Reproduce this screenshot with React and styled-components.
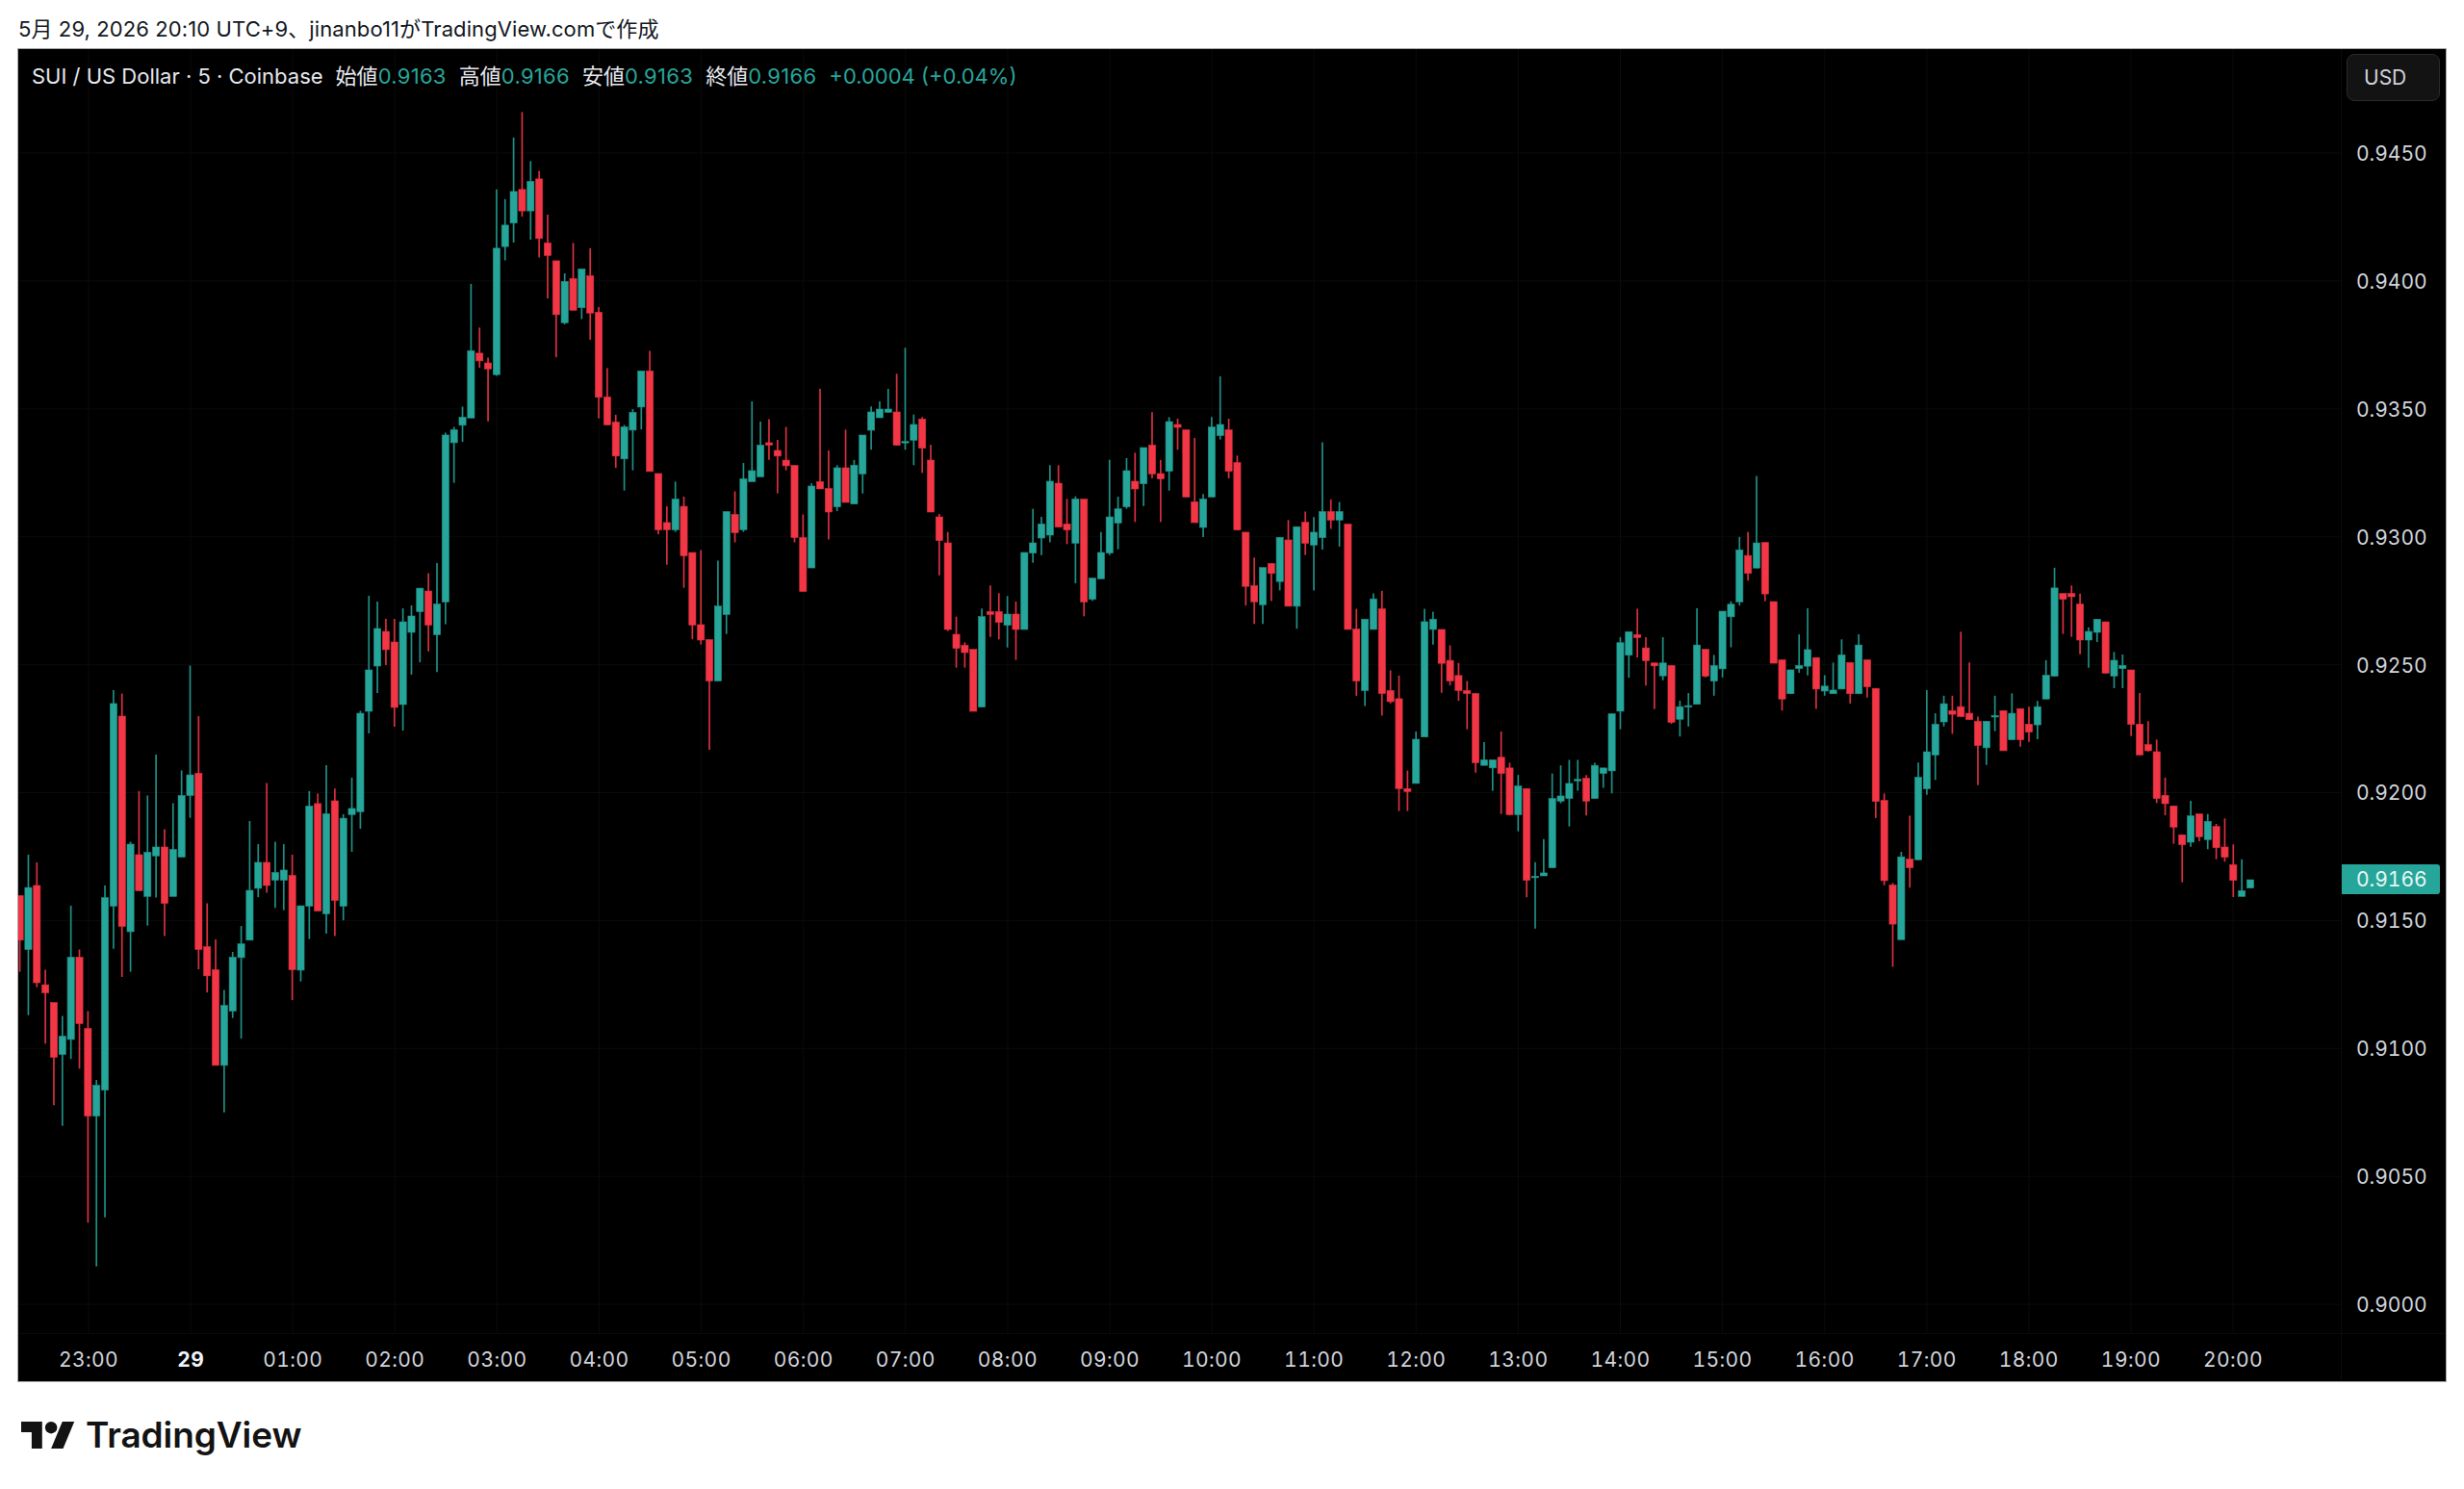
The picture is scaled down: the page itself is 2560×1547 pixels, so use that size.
import React from "react";
import styled, { createGlobalStyle } from "styled-components";

const GlobalStyle = createGlobalStyle`
    html, body {
        margin: 0;
        background: #fff;
    }
    body {
        font-family: Inter, "Noto Sans CJK JP", sans-serif;
    }
`;

const GREEN = "#26a69a";
const RED = "#f23645";

// candles read off the chart: up, wick top, body top, body bottom, wick bottom.
// each block was measured in its own crop, so y0 and k bring it back to page pixels
const blocks = [
    { y0: 680, k: 0.421, rows: [
        [0,595,595,705,783],[1,494,575,728,890],[0,513,570,810,821],[0,778,815,835,960],[0,859,859,994,1112],
        [1,892,942,987,1163],[1,620,747,950,998],[0,728,747,911,1022],[0,880,923,1139,1402],[1,1050,1063,1139,1510],
        [1,570,600,1075,1389],[1,88,121,621,726],[0,96,152,671,796],[1,462,468,684,783],[0,337,494,583,583],
        [1,348,488,597,669],[1,247,475,497,600],[0,431,475,614,695],[1,367,481,597,597],[1,286,348,500,500],
        [1,27,297,348,403],[0,152,293,728,777],[0,614,721,793,834],[0,703,778,1014,1014],[1,828,866,1014,1130],
        [1,734,747,880,897],[1,670,714,748,948],[1,411,582,705,705],[1,468,513,577,599],[0,317,513,570,588],
        [1,462,538,557,625],[1,468,532,557,631],[0,494,545,778,853],[1,620,620,779,807],[1,337,374,621,702],
        [0,343,368,633,633],[1,273,393,640,689],[0,331,361,607,695],[1,394,404,621,656],[1,304,380,395,487],
        [1,139,145,388,430],
    ]},
    { y0: 0, k: 1, rows: [
        [1,619,696,739,762],[1,625,653,692,720],[0,643,656,675,691],[0,643,667,735,755],[1,632,646,732,759],[1,629,640,657,701],
    ]},
    { y0: 100, k: 0.421, rows: [
        [1,1214,1214,1272,1397],[0,1177,1221,1305,1370],[1,1152,1253,1329,1421],[1,830,836,1248,1303],[1,816,823,855,954],
        [1,766,792,812,853],[1,463,628,794,794],[0,571,634,653,670],[0,645,658,673,802],[1,230,375,687,690],
        [1,254,318,371,405],[1,102,235,313,361],[0,39,230,283,297],[1,160,210,283,354],[0,184,204,351,398],
        [0,292,362,393,499],[0,406,406,539,644],[1,437,457,559,563],[0,362,450,528,528],[1,426,426,522,550],
        [0,375,443,535,601],[0,520,533,743,795],[0,671,742,811,811],[0,786,804,888,917],[1,811,816,895,973],
        [1,772,780,824,923],[1,678,678,767,822],[0,628,678,926,926],[0,931,931,1070,1081],[0,1012,1052,1070,1156],
        [1,951,994,1070,1075],[0,988,1012,1134,1213],[0,1126,1126,1305,1340],[0,1120,1304,1342,1353],[0,1341,1341,1443,1613],
        [1,1146,1258,1443,1443],[1,1025,1025,1279,1327],[0,975,1032,1077,1101],[1,905,944,1070,1075],[1,753,924,951,951],
        [1,803,861,939,939],[0,797,855,861,897],[0,848,874,888,980],[0,816,898,912,923],[0,911,911,1089,1101],
        [0,1032,1089,1222,1222],[1,955,962,1164,1164],[0,722,951,969,969],[0,874,968,1026,1094],
    ]},
    { y0: 360, k: 1 / 3, rows: [
        [1,370,378,500,513],[0,259,378,486,486],[1,354,370,491,491],[1,276,276,397,458],[1,187,204,261,322],
        [1,171,195,222,222],[1,132,195,205,205],[0,85,204,308,308],[1,4,296,299,322],[1,212,243,292,370],
        [0,220,226,317,394],[0,307,354,516,516],[0,522,531,605,713],[0,578,612,882,887],[0,842,897,941,1001],
        [0,922,931,954,1001],[0,944,944,1137,1137],[1,817,842,1124,1124],[0,745,826,835,905],[0,769,826,860,913],
        [1,778,834,869,938],[0,795,834,882,977],[1,642,642,882,882],[1,506,612,644,674],[1,531,553,597,650],
        [1,370,420,588,610],[0,370,426,563,563],[0,475,553,572,616],[1,467,475,613,738],[0,476,476,796,841],
        [1,722,722,788,793],[1,578,642,724,724],[1,353,531,644,650],[1,468,506,550,632],[1,348,387,500,506],
        [0,331,420,444,547],[1,315,315,428,497],[0,205,307,397,411],[0,354,396,413,547],[1,220,234,389,449],
        [0,225,243,252,322],[0,260,260,469,469],[0,285,484,549,549],[1,460,475,564,594],[1,220,251,469,469],
        [1,93,243,278,290],[0,225,260,389,411],[0,340,362,572,572],
    ]},
    { y0: 370, k: 0.3827, rows: [
        [0,478,478,625,677],[0,547,623,667,727],[1,574,574,675,727],[0,563,563,590,665],[1,492,492,612,636],
        [0,445,499,679,679],[1,463,463,679,740],[0,422,451,508,540],[1,437,478,513,636],[1,234,422,493,525],
        [0,389,422,445,469],[1,396,422,445,517],[0,456,456,742,742],[0,686,741,882,922],[1,714,714,908,950],
        [1,644,659,742,742],[0,637,686,916,976],[0,853,908,938,943],[0,867,930,1174,1235],[0,1125,1174,1182,1235],
        [1,1019,1040,1160,1160],[1,686,721,1034,1034],[1,694,714,742,783],[0,742,742,834,914],[0,785,826,882,894],
        [0,833,867,908,936],[0,882,908,916,1013],[0,916,916,1104,1131],[1,1048,1096,1111,1111],[1,1096,1096,1118,1180],
        [0,1019,1089,1133,1243],[0,1104,1118,1245,1247],[1,1137,1167,1245,1290],[0,1174,1174,1423,1469],[1,1374,1412,1415,1554],
        [1,1311,1403,1411,1411],[1,1133,1201,1389,1389],[1,1111,1194,1208,1214],[1,1096,1160,1201,1277],[1,1096,1149,1153,1180],
        [0,1137,1146,1208,1247],[1,1104,1111,1201,1201],[1,1118,1118,1133,1172],[1,971,971,1126,1187],[1,763,778,964,1013],
        [1,748,748,812,873],[0,686,756,764,818],[0,763,792,827,894],[0,833,833,841,958],[1,763,833,868,880],
    ]},
    { y0: 480, k: 0.3444, rows: [
        [0,614,614,785,790],[1,720,738,776,828],[1,697,735,738,798],[1,441,552,731,731],[0,565,565,646,650],
        [1,582,614,661,705],[1,450,450,624,650],[1,420,429,467,559],[1,226,265,422,433],[0,211,282,336,358],
        [1,42,244,320,320],[0,243,243,398,420],[0,421,421,607,607],[0,597,597,715,750],[1,627,627,699,699],
        [1,520,614,623,636],[1,441,566,616,644],[0,590,590,685,745],[1,643,676,691,705],[1,605,688,699,699],
        [1,535,582,685,685],[0,605,605,699,729],[1,520,552,699,699],[0,597,597,678,711],[0,683,683,1024,1074],
        [0,1000,1021,1263,1277],[0,1270,1276,1394,1523],[1,1176,1191,1441,1441],[0,1067,1198,1224,1284],[1,907,951,1200,1200],
        [1,688,874,986,1004],[1,758,791,884,959],[1,705,729,784,798],[0,705,750,761,820],[0,512,738,768,768],
        [0,605,758,777,777],[0,768,782,855,975],[1,782,782,862,914],[1,705,765,768,812],[0,750,750,871,871],
        [1,698,758,838,838],[0,744,744,838,859],[0,738,791,815,844],[1,721,738,793,836],[1,598,643,715,715],
        [1,319,380,646,646],
    ]},
    { y0: 580, k: 1 / 3, rows: [
        [0,110,110,128,236],[0,85,110,120,245],[0,110,143,255,299],[1,215,228,255,341],[1,190,190,231,261],
        [0,198,198,358,358],[1,292,318,367,405],[1,300,334,344,405],[0,348,348,518,554],[0,420,517,613,613],
        [0,508,581,600,602],[0,565,603,749,763],[0,684,739,765,801],[0,772,772,838,890],[0,862,862,893,1010],
        [1,756,803,885,899],[0,797,797,868,882],[1,797,820,877,907],[0,828,836,902,938],[0,811,900,932,946],
        [0,892,955,1004,1056],[1,938,1036,1054,1054],[1,1002,1002,1028,1028],
    ]},
];

const candles = blocks.flatMap(({ y0, k, rows }) =>
    rows.map(([up, high, top, bottom, low]) => ({
        up: up === 1,
        high: y0 + high * k,
        top: y0 + top * k,
        bottom: y0 + bottom * k,
        low: y0 + low * k,
    }))
);

const FIRST_X = 20.6;
const STEP = 8.845;
const BODY_W = 7.2;
const HOUR = 106.1;
const FIRST_HOUR_X = 92;
const PRICE_STEP = 132.9;
const PANE = { x: 19, y: 51, w: 2413, h: 1334 };

const prices = ["0.9450", "0.9400", "0.9350", "0.9300", "0.9250", "0.9200", "0.9150", "0.9100", "0.9050", "0.9000"];
const priceY = (i) => 159 + i * PRICE_STEP;
const times = ["23:00", "29", "01:00", "02:00", "03:00", "04:00", "05:00", "06:00", "07:00", "08:00", "09:00", "10:00",
    "11:00", "12:00", "13:00", "14:00", "15:00", "16:00", "17:00", "18:00", "19:00", "20:00"];
const ohlc = [["始値", "0.9163"], ["高値", "0.9166"], ["安値", "0.9163"], ["終値", "0.9166"]];

const Page = styled.div`
    display: flex;
    flex-direction: column;
    height: 1547px;
    background: #fff;
    overflow: hidden;
`;

const Caption = styled.div`
    height: 50px;
    padding: 6px 0 0 19px;
    box-sizing: border-box;
    display: flex;
    align-items: center;
    font-size: 22px;
    letter-spacing: 0.1px;
    color: #131722;
    white-space: nowrap;
`;

const Frame = styled.div`
    margin: 0 18px;
    height: 1386px;
    border: 1px solid #a8a8a8;
    box-sizing: border-box;
    background: #000;
    display: grid;
    grid-template-columns: 2413px 1fr;
    grid-template-rows: 1334px 1fr;
`;

const Pane = styled.div`
    position: relative;
    overflow: hidden;
`;

const ChartSvg = styled.svg`
    display: block;
`;

const GridLine = styled.line`
    stroke: #0b0b0b;
    stroke-width: 1;
`;

const Wick = styled.line`
    stroke: ${props => props.$up ? "#1f8f85" : "#d8303f"};
    stroke-width: 1.7;
`;

const Body = styled.rect`
    fill: ${props => props.$up ? GREEN : RED};
    stroke: ${props => props.$up ? "#1f8f85" : "#d8303f"};
    stroke-width: 0.6;
`;

const Legend = styled.div`
    position: absolute;
    left: 14px;
    top: 14px;
    display: flex;
    gap: 13px;
    font-size: 22px;
    line-height: 28px;
    color: #e6e8ee;
    white-space: nowrap;
`;

const LegendItem = styled.span`
    display: flex;
`;

const LegendValue = styled.span`
    color: ${GREEN};
    letter-spacing: 0.3px;
`;

const LegendChange = styled.span`
    color: ${GREEN};
`;

const PriceAxis = styled.div`
    position: relative;
    border-left: 1px solid #0b0b0b;
    display: flex;
    flex-direction: column;
    padding-top: 90px;
`;

const PriceLabel = styled.div`
    height: ${PRICE_STEP}px;
    flex: none;
    padding-left: 15px;
    font-size: 21px;
    line-height: 38px;
    font-variant-numeric: tabular-nums;
    color: #d1d4dc;
`;

const UnitButton = styled.div`
    position: absolute;
    left: 5px;
    top: 5px;
    width: 97px;
    height: 49px;
    box-sizing: border-box;
    padding-left: 17px;
    background: #131313;
    border: 1px solid #2a2a2a;
    border-radius: 8px;
    font-size: 21px;
    line-height: 47px;
    color: #d1d4dc;
`;

const LastPrice = styled.div`
    position: absolute;
    left: 0;
    top: 847px;
    width: 102px;
    height: 31px;
    padding-left: 15px;
    box-sizing: border-box;
    background: ${GREEN};
    border-radius: 0 3px 3px 0;
    font-size: 21px;
    line-height: 31px;
    font-variant-numeric: tabular-nums;
    color: #e8f6f4;
`;

const TimeAxis = styled.div`
    border-top: 1px solid #0b0b0b;
    display: flex;
    padding: 3px 0 0 20px;
    align-items: center;
`;

const TimeLabel = styled.div`
    width: ${HOUR}px;
    flex: none;
    text-align: center;
    font-size: 21px;
    letter-spacing: 0.4px;
    font-variant-numeric: tabular-nums;
    font-weight: ${props => props.$day ? 700 : 400};
    color: ${props => props.$day ? "#f0f3fa" : "#d1d4dc"};
`;

const AxisCorner = styled.div`
    border-top: 1px solid #0b0b0b;
    border-left: 1px solid #0b0b0b;
`;

const Footer = styled.div`
    display: flex;
    align-items: center;
    gap: 11px;
    padding: 41px 0 0 22px;
    color: #131313;
`;

const LogoMark = styled.svg`
    display: block;
    fill: currentColor;
`;

const WordMark = styled.span`
    font-size: 37px;
    font-weight: 600;
    line-height: 28px;
    letter-spacing: -0.1px;
`;

const Chart = () => (
    <ChartSvg width={PANE.w} height={PANE.h} viewBox={`${PANE.x} ${PANE.y} ${PANE.w} ${PANE.h}`}>
        {prices.map((p, i) => (
            <GridLine key={p} x1={PANE.x} x2={PANE.x + PANE.w} y1={priceY(i)} y2={priceY(i)} />
        ))}
        {times.map((t, i) => {
            const x = FIRST_HOUR_X + i * HOUR;
            return <GridLine key={t} x1={x} x2={x} y1={PANE.y} y2={PANE.y + PANE.h} />;
        })}
        {candles.map((c, i) => {
            const x = FIRST_X + i * STEP;
            return (
                <g key={i}>
                    <Wick $up={c.up} x1={x} x2={x} y1={c.high} y2={c.low} />
                    <Body $up={c.up} x={x - BODY_W / 2} y={c.top} width={BODY_W} height={Math.max(c.bottom - c.top, 1.5)} />
                </g>
            );
        })}
    </ChartSvg>
);

const App = () => (
    <Page>
        <GlobalStyle />
        <Caption>5月 29, 2026 20:10 UTC+9、jinanbo11がTradingView.comで作成</Caption>
        <Frame>
            <Pane>
                <Chart />
                <Legend>
                    <span>SUI / US Dollar · 5 · Coinbase</span>
                    {ohlc.map(([label, value]) => (
                        <LegendItem key={label}>
                            {label}<LegendValue>{value}</LegendValue>
                        </LegendItem>
                    ))}
                    <LegendChange>+0.0004 (+0.04%)</LegendChange>
                </Legend>
            </Pane>
            <PriceAxis>
                <UnitButton>USD</UnitButton>
                {prices.map(p => <PriceLabel key={p}>{p}</PriceLabel>)}
                <LastPrice>0.9166</LastPrice>
            </PriceAxis>
            <TimeAxis>
                {times.map(t => <TimeLabel key={t} $day={t === "29"}>{t}</TimeLabel>)}
            </TimeAxis>
            <AxisCorner />
        </Frame>
        <Footer>
            <LogoMark width="56" height="28" viewBox="0 4 36 18">
                <path d="M14 22H7V11H0V4h14v18ZM28 22h-8l7.5-18h8L28 22Z" />
                <circle cx="20" cy="8" r="4" />
            </LogoMark>
            <WordMark>TradingView</WordMark>
        </Footer>
    </Page>
);

export default App;
